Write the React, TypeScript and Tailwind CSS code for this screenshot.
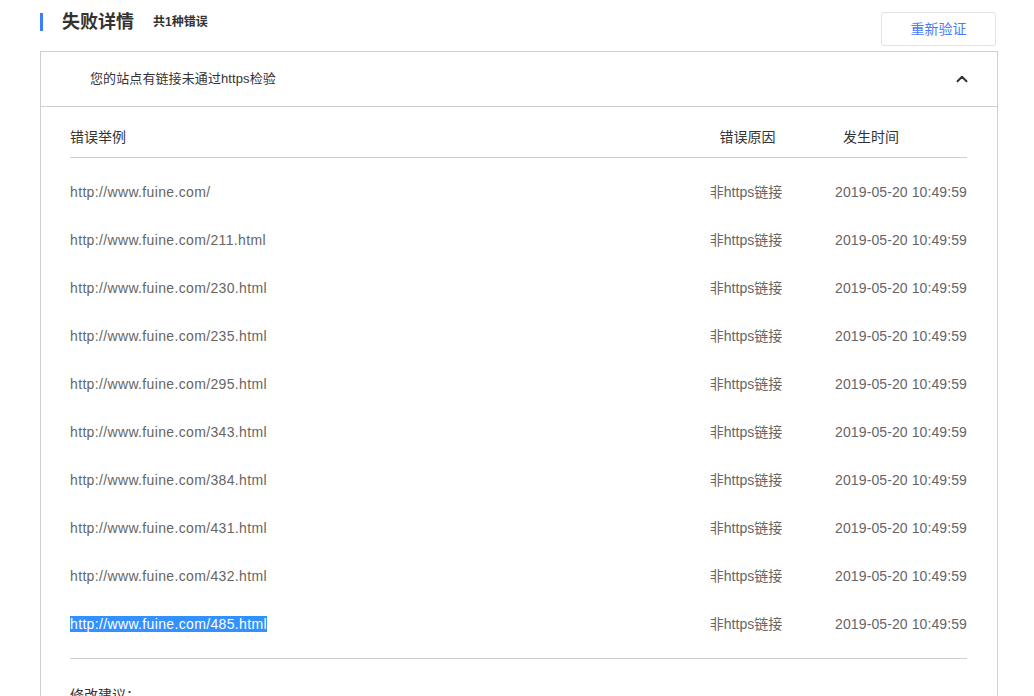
import { ChevronUp } from 'lucide-react';

const urls = [
  'http://www.fuine.com/',
  'http://www.fuine.com/211.html',
  'http://www.fuine.com/230.html',
  'http://www.fuine.com/235.html',
  'http://www.fuine.com/295.html',
  'http://www.fuine.com/343.html',
  'http://www.fuine.com/384.html',
  'http://www.fuine.com/431.html',
  'http://www.fuine.com/432.html',
  'http://www.fuine.com/485.html',
];

export default function App() {
  return (
    <div
      className="min-h-screen bg-white pl-10 pr-[36px] pt-3"
      style={{ fontFamily: '"Liberation Sans", "Noto Sans CJK SC", sans-serif' }}
    >
      {/* Title row */}
      <div className="flex justify-between h-[39px]">
        <div className="flex items-center h-[18px] mt-px">
          <div className="w-[3px] h-[18px] bg-[#3a7dff]" />
          <h1 className="ml-[19px] text-[18px] leading-[18px] font-bold text-[#333]">失败详情</h1>
          <span className="ml-[19px] text-[12px] font-bold text-[#333]">共1种错误</span>
        </div>
        <button className="w-[115px] h-[34px] mr-[2px] border border-[#e3e3e3] rounded-[3px] text-[14px] text-[#4a7cf6] bg-white">
          重新验证
        </button>
      </div>

      {/* Panel */}
      <div className="border border-[#cfcfcf]">
        <div className="flex items-center justify-between h-[55px] pl-[49px] pr-[26px] border-b border-[#cfcfcf]">
          <span className="text-[13px] text-[#333] tracking-[0.1px]">您的站点有链接未通过https检验</span>
          <ChevronUp size={18} strokeWidth={2.6} className="text-[#333]" />
        </div>

        <div className="pl-[29px] pr-[30px]">
          <div className="flex items-center pt-5 pb-[10px] border-b border-[#cfcfcf] text-[14px] leading-5 text-[#333]">
            <div className="flex-1">错误举例</div>
            <div className="w-[120px] pl-px text-center">错误原因</div>
            <div className="w-[132px] ml-7 pl-2">发生时间</div>
          </div>

          <div className="pt-[10px] pb-[10px] border-b border-[#cfcfcf]">
            {urls.map((u, i) => (
              <div key={u} className="flex items-center h-12 text-[14px] text-[#666]">
                <div className="flex-1 tracking-[0.35px]">
                  {i === urls.length - 1 ? (
                    <span className="bg-[#3390ff] text-white">{u}</span>
                  ) : (
                    u
                  )}
                </div>
                <div className="w-[120px] pr-[6px] text-center">非https链接</div>
                <div className="w-[134px] ml-6 text-right tracking-[0.1px]">2019-05-20 10:49:59</div>
              </div>
            ))}
          </div>

          <div className="pt-[26px] pb-6 text-[14px] text-[#333]">修改建议：</div>
        </div>
      </div>
    </div>
  );
}
